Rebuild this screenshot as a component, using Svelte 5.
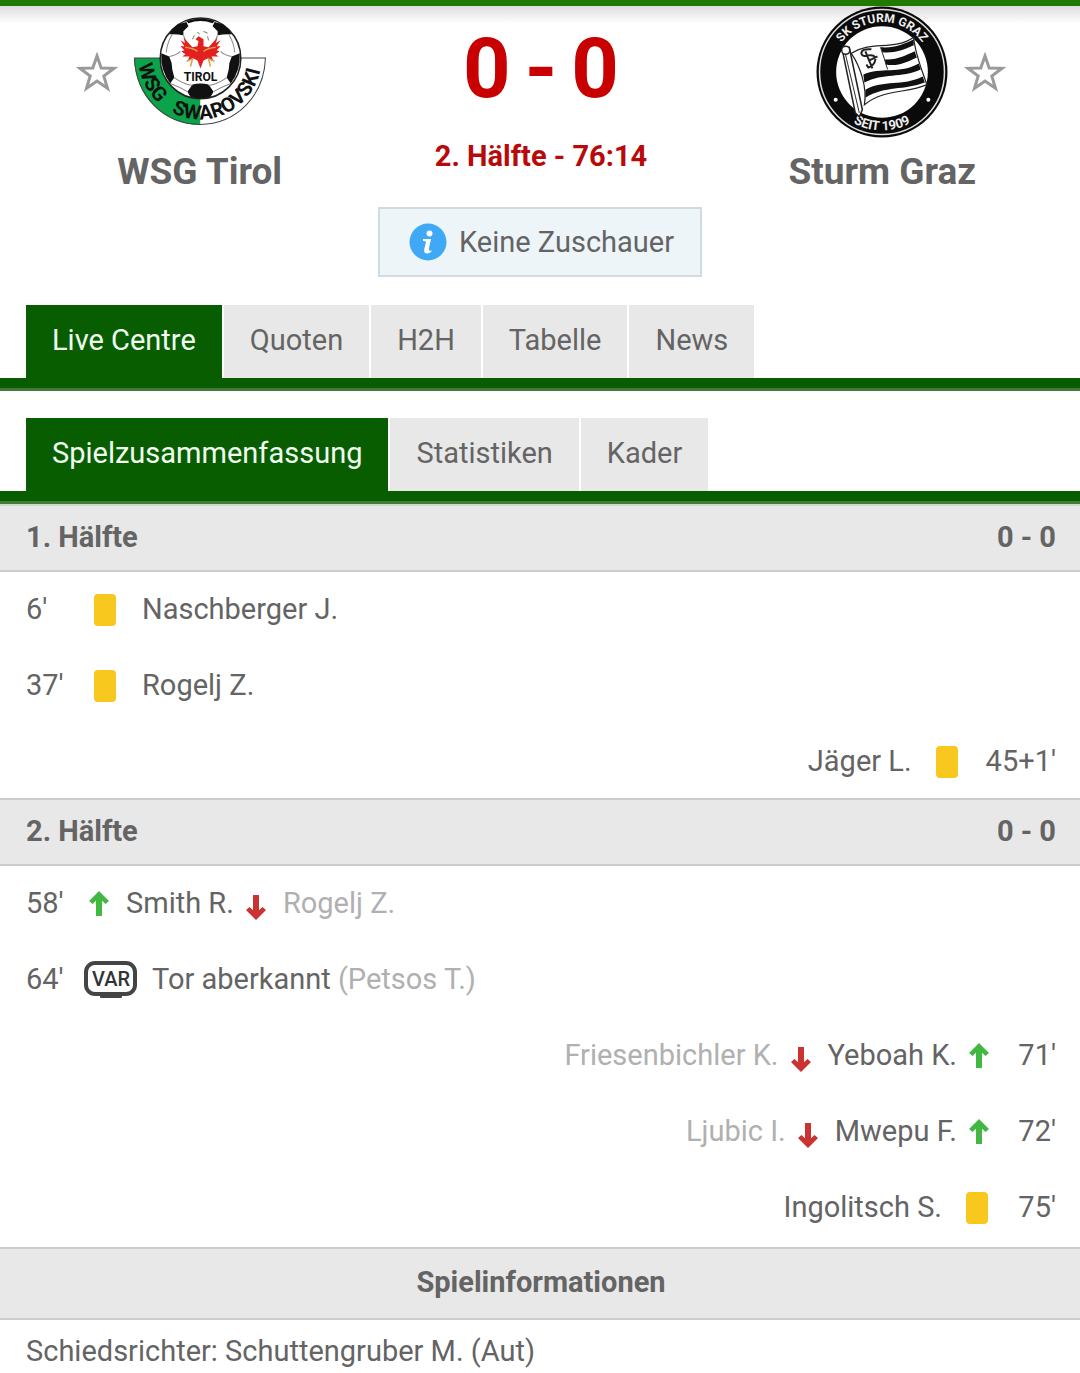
<script>
    let activeTab = 'Live Centre';
    let activeView = 'Spielzusammenfassung';
    let homeStarred = false;
    let awayStarred = false;

    const tabs = ['Live Centre', 'Quoten', 'H2H', 'Tabelle', 'News'];
    const views = ['Spielzusammenfassung', 'Statistiken', 'Kader'];

    const halves = [
        {
            name: '1. Hälfte',
            score: '0 - 0',
            events: [
                { minute: "6'", side: 'home', type: 'card', player: 'Naschberger J.' },
                { minute: "37'", side: 'home', type: 'card', player: 'Rogelj Z.' },
                { minute: "45+1'", side: 'away', type: 'card', player: 'Jäger L.' },
            ],
        },
        {
            name: '2. Hälfte',
            score: '0 - 0',
            events: [
                { minute: "58'", side: 'home', type: 'sub', player: 'Smith R.', off: 'Rogelj Z.' },
                { minute: "64'", side: 'home', type: 'var', player: 'Tor aberkannt', note: '(Petsos T.)' },
                { minute: "71'", side: 'away', type: 'sub', player: 'Yeboah K.', off: 'Friesenbichler K.' },
                { minute: "72'", side: 'away', type: 'sub', player: 'Mwepu F.', off: 'Ljubic I.' },
                { minute: "75'", side: 'away', type: 'card', player: 'Ingolitsch S.' },
            ],
        },
    ];
</script>

{#snippet star()}
    <svg class="star" viewBox="0 0 42 42" aria-hidden="true">
        <path d="M21 5 L25.200 17 L38 17.300 L27.800 25 L31.500 37.300 L21 30 L10.500 37.300 L14.200 25 L4 17.300 L16.800 17 Z" />
    </svg>
{/snippet}

{#snippet arrowUp()}
    <svg class="arrow" viewBox="0 0 30 36" aria-hidden="true">
        <path d="M15 6 L25 16 L21.500 19 L18 15.700 V31 H12 V15.700 L8.500 19 L5 16 Z" fill="#42b842" />
    </svg>
{/snippet}

{#snippet arrowDown()}
    <svg class="arrow" viewBox="0 0 30 36" aria-hidden="true">
        <path d="M15 35 L25 25 L21.500 22 L18 25.300 V10 H12 V25.300 L8.500 22 L5 25 Z" fill="#cb3232" />
    </svg>
{/snippet}

{#snippet card()}
    <svg class="card" viewBox="0 0 42 36" aria-hidden="true">
        <rect x="10" y="3" width="22" height="32" rx="4" fill="#f8c81e" />
    </svg>
{/snippet}

{#snippet varIcon()}
    <svg class="var" viewBox="0 0 54 38" role="img" aria-label="VAR">
        <rect x="2" y="3" width="49" height="31" rx="9" fill="#fff" stroke="#444" stroke-width="4" />
        <rect x="16" y="34" width="22" height="4" rx="1" fill="#444" />
        <text x="27" y="26" text-anchor="middle" font-size="20" font-weight="500" fill="#333">VAR</text>
    </svg>
{/snippet}

<main class="match">
    <header class="match-header">
        <section class="team home">
            <div class="team-crest">
                <button class="star-button" aria-label="WSG Tirol merken" aria-pressed={homeStarred} on:click={() => (homeStarred = !homeStarred)}>
                    {@render star()}
                </button>
                <svg class="crest" viewBox="0 0 131 131" role="img" aria-label="WSG Tirol">
                    <path d="M0 51.500 H66 V118 C30 118 1 90 0 51.500 Z" fill="#0ca44a" />
                    <path d="M66 51.500 H131 C130 90 101 118 66 118 Z" fill="#fff" />
                    <path d="M0.500 51.500 H130.500 C129 90 101 117.500 65.500 117.500 C30 117.500 2 90 0.500 51.500 Z" fill="none" stroke="#444" stroke-width="1" />
                    <circle cx="66" cy="52" r="40" fill="#fff" stroke="#222" stroke-width="1.500" />
                    <!-- football panels -->
                    <path d="M52 15 Q66 10 80 15 L78 17 Q66 13 54 17 Z M35 28 Q38 22 44 18 L52 16 L54 20 L49 25 L49 29 Q44 28 38 28 Z M97 28 Q94 22 88 18 L80 16 L78 20 L83 25 L83 29 Q88 28 94 28 Z M27 47 L35 50 Q38 56 38 63 L40 71 L36 77 Q26 64 27 47 Z M105 47 L97 50 Q94 56 94 63 L92 71 L96 77 Q106 64 105 47 Z M58 78 Q66 76 74 78 L79 85 L76 90 Q66 93 56 90 L53 85 Z" fill="#111" />
                    <path d="M49 29 Q52 34 50 40 M83 29 Q80 34 82 40 M38 28 Q33 36 32 46 M94 28 Q99 36 100 46 M35 50 Q42 49 46 45 M97 50 Q90 49 86 45 M40 71 Q48 77 58 79 M92 71 Q84 77 74 79 M36 77 Q44 80 53 85 M96 77 Q88 80 79 85" fill="none" stroke="#888" stroke-width="1" />
                    <!-- eagle -->
                    <path d="M64 30 L61 33 L64 35 L63 40 L58 41 L49 31 L51 37 L46 34 L50 40 L46 40 L50 44 L47 45 L51 48 L48 50 L55 50 L53 55 L59 52 L63 54 L66 62 L69 54 L73 52 L79 55 L77 50 L84 50 L81 48 L85 45 L82 44 L86 40 L82 40 L86 34 L81 37 L83 31 L74 41 L69 40 L69 33 Z" fill="#e3201f" />
                    <path d="M51 41 Q59 42 63 45 M81 41 Q73 42 69 45 M59 52 L52 55 M58 53 L56 60 M73 52 L80 55 M74 53 L76 60" fill="none" stroke="#d9a04c" stroke-width="1.500" />
                    <path d="M58 33 L60 29 M63 26 L65 28 M69 25 L73 27 M73 30 L74 34" fill="none" stroke="#8a8f6a" stroke-width="1" />
                    <text x="66" y="74" text-anchor="middle" font-size="12" font-weight="700" fill="#111">TIROL</text>
                    <path id="wsg-arc" d="M4.500 51.500 A61 61 0 0 0 126.500 51.500" fill="none" />
                    <text font-size="20" font-weight="700" fill="#111"><textPath href="#wsg-arc" startOffset="7">WSG</textPath></text>
                    <text font-size="20" font-weight="700" fill="#111"><textPath href="#wsg-arc" startOffset="66">SWAROVSKI</textPath></text>
                </svg>
            </div>
            <h1 class="team-name">WSG Tirol</h1>
        </section>

        <section class="result">
            <p class="score"><span>0</span><span>-</span><span>0</span></p>
            <p class="clock">2. Hälfte - 76:14</p>
        </section>

        <section class="team away">
            <div class="team-crest">
                <svg class="crest" viewBox="0 0 131 131" role="img" aria-label="Sturm Graz">
                    <circle cx="65.500" cy="65.500" r="65" fill="#0a0a0a" />
                    <circle cx="65.500" cy="65.500" r="62" fill="none" stroke="#ddd" stroke-width="1.500" />
                    <circle cx="65.500" cy="65.500" r="45.500" fill="#fff" />
                    <path id="sturm-top" d="M16 65.500 A49.500 49.500 0 0 1 115 65.500" fill="none" />
                    <path id="sturm-bottom" d="M7.500 65.500 A58 58 0 0 0 123.500 65.500" fill="none" />
                    <text font-size="12" font-weight="700" fill="#eee" text-anchor="middle"><textPath href="#sturm-top" startOffset="50%">SK STURM GRAZ</textPath></text>
                    <text font-size="13" font-weight="700" fill="#eee" text-anchor="middle"><textPath href="#sturm-bottom" startOffset="50%">SEIT 1909</textPath></text>
                    <circle cx="19.500" cy="93" r="2" fill="#fff" />
                    <circle cx="111.500" cy="93" r="2" fill="#fff" />
                    <!-- flag -->
                    <path d="M26 43 L33 41 L46 103 L43 110 L39 106 Z" fill="#fff" stroke="#222" stroke-width="1.500" />
                    <path d="M29 47 L43 106" stroke="#333" stroke-width="1" />
                    <circle cx="29.500" cy="44" r="4" fill="#fff" stroke="#222" stroke-width="1.500" />
                    <path d="M35 47 C54 34 77 45 97 31 C98 47 106 66 110 78 C90 87 68 82 48 98 C51 81 44 60 35 47 Z" fill="#fff" stroke="#222" stroke-width="1.200" />
                    <path d="M64 41 C78 42 87 38 97 33 L97 39 C86 44 78 47 66 46 Z M68 53 C80 54 89 49 98 45 L100 51 C89 56 82 60 69 58 Z M47 68 C64 60 83 68 102 57 L104 63 C84 72 67 66 48 76 Z M49 83 C67 73 86 80 106 70 L108 76 C87 84 69 79 49 91 Z" fill="#111" />
                    <path d="M64 41 Q68 52 71 63" fill="none" stroke="#333" stroke-width="1" />
                    <path d="M55 43 Q45 42 45 47 Q46 51 52 49 Q59 48 59 53 Q58 59 52 61 L50 58 M49 45 L56 62 M53 54 L61 50" fill="none" stroke="#222" stroke-width="2" />
                </svg>
                <button class="star-button" aria-label="Sturm Graz merken" aria-pressed={awayStarred} on:click={() => (awayStarred = !awayStarred)}>
                    {@render star()}
                </button>
            </div>
            <h1 class="team-name">Sturm Graz</h1>
        </section>
    </header>

    <p class="notice">
        <svg class="info" viewBox="0 0 38 38" aria-hidden="true">
            <circle cx="19" cy="19" r="18.500" fill="#3fa9f5" />
            <circle cx="20.500" cy="10.500" r="3" fill="#fff" />
            <path d="M14 16 H22 L19.800 26 Q19.500 28.500 23 27.500 Q21.500 30.500 17.500 30.500 Q14.500 30 15.300 26 L17 19 Q16.500 17.800 14 18 Z" fill="#fff" />
        </svg>
        Keine Zuschauer
    </p>

    <nav class="tabs">
        {#each tabs as tab (tab)}
            <a href="#{tab}" class="tab" class:active={activeTab === tab} on:click|preventDefault={() => (activeTab = tab)}>{tab}</a>
        {/each}
    </nav>

    <nav class="tabs">
        {#each views as view (view)}
            <a href="#{view}" class="tab" class:active={activeView === view} on:click|preventDefault={() => (activeView = view)}>{view}</a>
        {/each}
    </nav>

    {#each halves as half (half.name)}
        <section class="half">
            <h2 class="band">
                <span>{half.name}</span>
                <span>{half.score}</span>
            </h2>
            <ul class="events">
                {#each half.events as event (event.minute)}
                    <li class="event {event.side}">
                        <span class="minute">{event.minute}</span>
                        <span class="detail">
                            {#if event.type === 'sub' && event.side === 'home'}
                                {@render arrowUp()}
                                <span>{event.player}</span>
                                {@render arrowDown()}
                                <span class="muted">{event.off}</span>
                            {:else if event.type === 'sub'}
                                <span class="muted">{event.off}</span>
                                {@render arrowDown()}
                                <span>{event.player}</span>
                                {@render arrowUp()}
                            {:else if event.type === 'var'}
                                {@render varIcon()}
                                <span>{event.player} <span class="muted">{event.note}</span></span>
                            {:else if event.side === 'home'}
                                {@render card()}
                                <span>{event.player}</span>
                            {:else}
                                <span>{event.player}</span>
                                {@render card()}
                            {/if}
                        </span>
                    </li>
                {/each}
            </ul>
        </section>
    {/each}

    <section class="match-info">
        <h2 class="band centered">Spielinformationen</h2>
        <p class="referee">Schiedsrichter: Schuttengruber M. (Aut)</p>
    </section>
</main>

<style>
    :global(body) {
        background: #fff;
    }

    .match {
        font-family: Roboto, 'Liberation Sans', sans-serif;
        font-size: 29px;
        line-height: 34px;
        color: #646464;
        border-top: 6px solid #217a00;
        background: linear-gradient(#dedede, #fff 18px);
    }

    h1,
    h2,
    p,
    ul {
        margin: 0;
        padding: 0;
        font-size: inherit;
    }

    .match-header {
        display: grid;
        grid-template-columns: 11fr 8fr 11fr;
        padding-left: 2px;
    }

    .team {
        text-align: center;
    }

    .team-crest {
        display: grid;
        grid-template-columns: 1fr auto 1fr;
        align-items: center;
        gap: 16px;
    }

    .team.home .star-button {
        justify-self: end;
    }

    .team.away .crest {
        grid-column: 2;
    }

    .star-button {
        width: 42px;
        padding: 0;
        border: none;
        background: none;
        cursor: pointer;
    }

    .star {
        display: block;
        width: 42px;
        height: 42px;
        fill: none;
        stroke: #999;
        stroke-width: 3;
    }

    .crest {
        display: block;
        width: 132px;
        height: 132px;
    }

    .team-name {
        margin-top: 12px;
        font-size: 37px;
        line-height: 44px;
        font-weight: 700;
    }

    .result {
        text-align: center;
        color: #c80000;
        font-weight: 700;
    }

    .score {
        display: flex;
        justify-content: center;
        gap: 14px;
        padding-top: 14px;
        font-size: 83px;
        line-height: 98px;
    }

    .clock {
        padding-top: 21px;
        color: #b80a0a;
    }

    .notice {
        display: flex;
        align-items: center;
        gap: 12px;
        width: fit-content;
        margin: 13px auto 28px;
        padding: 14px 26px 14px 29px;
        border: 2px solid #d1dae1;
        background: #edf5f9;
    }

    .info {
        width: 38px;
        height: 38px;
    }

    .tabs {
        display: flex;
        gap: 2px;
        padding-left: 26px;
        padding-bottom: 10px;
        border-bottom: 3px solid #417c3b;
        box-shadow: inset 0 -10px #085d00;
    }

    .tabs + .tabs {
        margin-top: 27px;
    }

    .tab {
        padding: 18px 26px 21px;
        background: #e8e8e8;
        color: #646464;
        text-decoration: none;
    }

    .tab.active {
        background: #085d00;
        color: #f0fff0;
    }

    .band {
        display: flex;
        justify-content: space-between;
        padding: 14px 24px 16px 26px;
        border-top: 2px solid #ccc;
        border-bottom: 2px solid #ccc;
        background: #e8e8e8;
        font-weight: 700;
    }

    .tabs + .half .band {
        border-top-color: #c8dcc8;
    }

    .band.centered {
        justify-content: center;
        padding-top: 16px;
        padding-bottom: 19px;
    }

    .events {
        display: grid;
        gap: 2px;
        list-style: none;
    }

    .event {
        display: flex;
        align-items: center;
        height: 74px;
        padding: 0 24px 0 26px;
    }

    .event.away {
        flex-direction: row-reverse;
    }

    .minute {
        min-width: 58px;
    }

    .away .minute {
        min-width: 40px;
        padding-left: 18px;
        text-align: right;
    }

    .detail {
        display: flex;
        align-items: center;
    }

    .muted {
        color: #b0b0b0;
    }

    .arrow {
        width: 30px;
        height: 36px;
        margin: 0 12px 0 7px;
    }

    .arrow:first-child {
        margin-left: 0;
    }

    .arrow:last-child {
        margin-right: 4px;
    }

    .card {
        width: 42px;
        height: 36px;
    }

    .var {
        width: 54px;
        height: 38px;
    }

    .home .card {
        margin-right: 16px;
    }

    .home .var {
        margin-right: 14px;
    }

    .away .card {
        margin-left: 14px;
    }

    .match-info {
        margin-top: 3px;
    }

    .referee {
        padding: 14px 26px 8px;
    }
</style>
